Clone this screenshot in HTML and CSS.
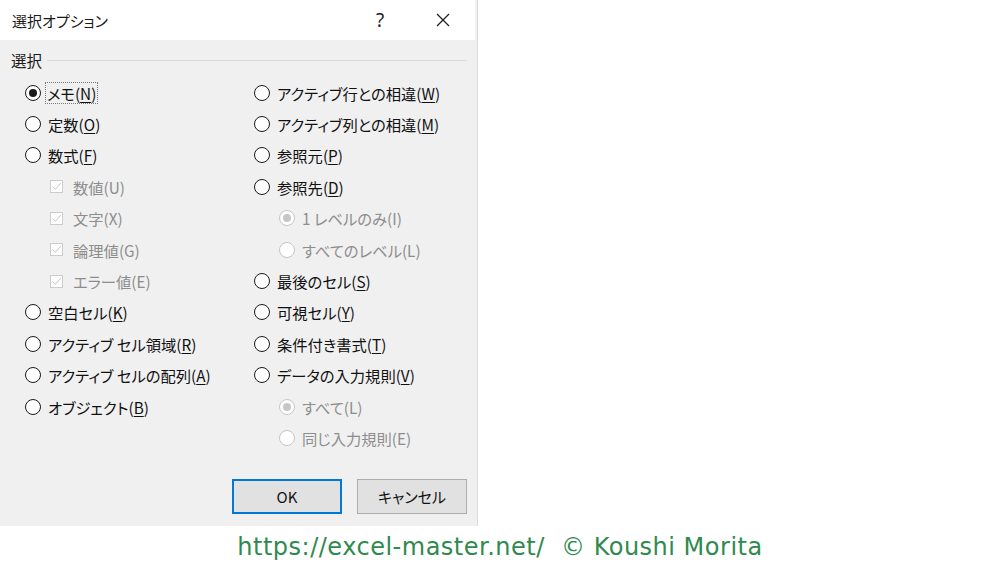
FILE: index.html
```html
<!DOCTYPE html>
<html lang="ja">
<head>
<meta charset="utf-8">
<title>選択オプション</title>
<link rel="stylesheet" href="styles.css">
</head>
<body>
<div class="dialog">
  <div class="titlebar">
    <span class="title">選択オプション</span>
    <span class="help">?</span>
    <span class="close"><svg width="14" height="14" viewBox="0 0 14 14"><path d="M1 1L13 13M13 1L1 13" stroke="#222" stroke-width="1.3" fill="none"/></svg></span>
  </div>
  <div class="content">
    <div class="legend"><span class="legend-text">選択</span><span class="legend-line"></span></div>
    <div class="cols">
      <div class="col col-left">
        <div class="row"><span class="radio checked"></span><span class="label focus">メモ(<u>N</u>)</span></div>
        <div class="row"><span class="radio"></span><span class="label">定数(<u>O</u>)</span></div>
        <div class="row"><span class="radio"></span><span class="label">数式(<u>F</u>)</span></div>
        <div class="row sub"><span class="check"><svg width="13" height="13" viewBox="0 0 13 13"><path d="M2.5 6.5L5.3 9.3L10.8 3.2" stroke="#c4c4c4" stroke-width="1" fill="none"/></svg></span><span class="label dis">数値(U)</span></div>
        <div class="row sub"><span class="check"><svg width="13" height="13" viewBox="0 0 13 13"><path d="M2.5 6.5L5.3 9.3L10.8 3.2" stroke="#c4c4c4" stroke-width="1" fill="none"/></svg></span><span class="label dis">文字(X)</span></div>
        <div class="row sub"><span class="check"><svg width="13" height="13" viewBox="0 0 13 13"><path d="M2.5 6.5L5.3 9.3L10.8 3.2" stroke="#c4c4c4" stroke-width="1" fill="none"/></svg></span><span class="label dis">論理値(G)</span></div>
        <div class="row sub"><span class="check"><svg width="13" height="13" viewBox="0 0 13 13"><path d="M2.5 6.5L5.3 9.3L10.8 3.2" stroke="#c4c4c4" stroke-width="1" fill="none"/></svg></span><span class="label dis">エラー値(E)</span></div>
        <div class="row"><span class="radio"></span><span class="label">空白セル(<u>K</u>)</span></div>
        <div class="row"><span class="radio"></span><span class="label">アクティブ セル領域(<u>R</u>)</span></div>
        <div class="row"><span class="radio"></span><span class="label">アクティブ セルの配列(<u>A</u>)</span></div>
        <div class="row"><span class="radio"></span><span class="label">オブジェクト(<u>B</u>)</span></div>
      </div>
      <div class="col col-right">
        <div class="row"><span class="radio"></span><span class="label">アクティブ行との相違(<u>W</u>)</span></div>
        <div class="row"><span class="radio"></span><span class="label">アクティブ列との相違(<u>M</u>)</span></div>
        <div class="row"><span class="radio"></span><span class="label">参照元(<u>P</u>)</span></div>
        <div class="row"><span class="radio"></span><span class="label">参照先(<u>D</u>)</span></div>
        <div class="row subr"><span class="radio dis checked"></span><span class="label dis">1 レベルのみ(I)</span></div>
        <div class="row subr"><span class="radio dis"></span><span class="label dis">すべてのレベル(L)</span></div>
        <div class="row"><span class="radio"></span><span class="label">最後のセル(<u>S</u>)</span></div>
        <div class="row"><span class="radio"></span><span class="label">可視セル(<u>Y</u>)</span></div>
        <div class="row"><span class="radio"></span><span class="label">条件付き書式(<u>T</u>)</span></div>
        <div class="row"><span class="radio"></span><span class="label">データの入力規則(<u>V</u>)</span></div>
        <div class="row subr"><span class="radio dis checked"></span><span class="label dis">すべて(L)</span></div>
        <div class="row subr"><span class="radio dis"></span><span class="label dis">同じ入力規則(E)</span></div>
      </div>
    </div>
    <div class="buttons">
      <button class="btn btn-ok">OK</button>
      <button class="btn">キャンセル</button>
    </div>
  </div>
</div>
<div class="footer">https://excel-master.net/&nbsp;&nbsp;© Koushi Morita</div>
</body>
</html>
```
FILE: styles.css
```css
* { box-sizing: border-box; }
html, body { margin: 0; padding: 0; }
body {
  width: 1000px;
  height: 563px;
  background: #fff;
  font-family: "Noto Sans CJK JP", "Noto Sans", sans-serif;
  font-feature-settings: "palt";
  overflow: hidden;
}
.dialog {
  width: 478px;
  height: 526px;
  background: #f0f0f0;
  border-right: 1px solid #dcdcdc;
  display: flex;
  flex-direction: column;
}
.titlebar {
  height: 40px;
  background: #fff;
  display: flex;
  align-items: center;
  padding-left: 12px;
  margin-right: 2px;
}
.title { font-size: 15px; color: #1a1a1a; flex: 1; }
.help { font-size: 19px; color: #222; width: 11px; margin-right: 49px; font-family: "Noto Sans", sans-serif; }
.close { width: 14px; height: 14px; margin-right: 25px; display: flex; }
.content {
  flex: 1;
  display: flex;
  flex-direction: column;
}
.legend {
  display: flex;
  align-items: center;
  height: 18px;
  margin-top: 11px;
  padding-left: 11px;
  padding-right: 10px;
}
.legend-text { font-size: 15.5px; color: #1a1a1a; margin-right: 5px; line-height: 18px; }
.legend-line { flex: 1; height: 1px; background: #dadada; }
.cols {
  display: grid;
  grid-template-columns: 229px 1fr;
  padding-left: 25px;
  margin-top: 8px;
}
.col { display: flex; flex-direction: column; }
.row {
  height: 31.4px;
  display: flex;
  align-items: center;
  gap: 7px;
  font-size: 15.3px;
  color: #111;
}
.row.sub { padding-left: 25px; gap: 10px; }
.row.subr { padding-left: 25px; gap: 7px; }
.label { line-height: 20px; white-space: nowrap; }
.label u { text-decoration-thickness: 1px; text-underline-offset: 2px; }
.label.focus { outline: 1px dotted #777; outline-offset: 0; padding: 0 1px; margin-left: -2px; }
.label.dis { color: #8d8d8d; }
.radio {
  width: 16px;
  height: 16px;
  border: 1.5px solid #1a1a1a;
  border-radius: 50%;
  background: #fff;
  flex: none;
  display: flex;
  align-items: center;
  justify-content: center;
}
.radio.checked::after {
  content: "";
  width: 8px;
  height: 8px;
  border-radius: 50%;
  background: #1a1a1a;
}
.radio.dis { border: 1px solid #c6c6c6; background: #fff; }
.radio.dis.checked::after { background: #c6c6c6; }
.check {
  width: 13px;
  height: 13px;
  border: 1px solid #cccccc;
  background: #fff;
  flex: none;
  display: flex;
}
.check svg { margin: -1px; }
.buttons {
  display: flex;
  gap: 15px;
  padding-left: 232px;
  margin-top: auto;
  margin-bottom: 12px;
}
.btn {
  width: 110px;
  height: 35px;
  background: #e1e1e1;
  border: 1px solid #adadad;
  font-family: "Noto Sans CJK JP", "Noto Sans", sans-serif;
  font-feature-settings: "palt";
  font-size: 15px;
  color: #111;
  padding: 0;
}
.btn-ok { border: 2px solid #0078d7; }
.footer {
  height: 37px;
  text-align: center;
  font-family: "DejaVu Sans", sans-serif;
  font-size: 24px;
  letter-spacing: 0.5px;
  line-height: 37px;
  color: #2f8a4e;
  padding-top: 3px;
}
```
